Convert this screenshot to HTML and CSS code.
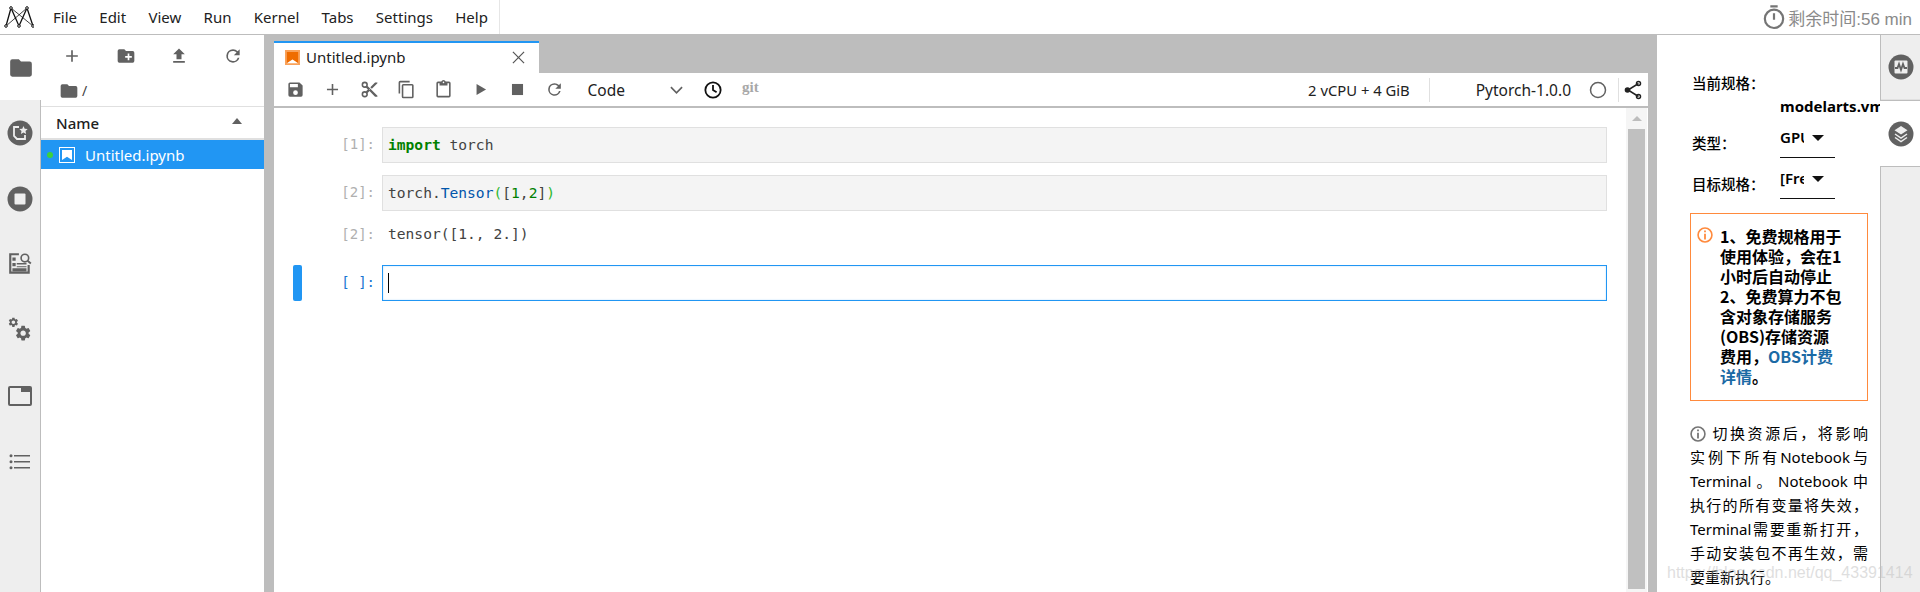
FILE: index.html
```html
<!DOCTYPE html>
<html lang="zh">
<head>
<meta charset="utf-8">
<title>JupyterLab</title>
<link rel="stylesheet" href="styles.css">
</head>
<body>
<div class="app">
  <header class="topbar">
    <svg class="logo" viewBox="0 0 30 22" width="30" height="22"><path fill="none" stroke="#111" stroke-width="1.300" d="M2 20 7 2 15 20 23 2 29 20"/><path fill="none" stroke="#111" stroke-width=".8" d="M7 2 29 20M23 2 2 20"/><g fill="#fff" stroke="#111" stroke-width="1"><circle cx="2" cy="20" r="1.300"/><circle cx="7" cy="2" r="1.300"/><circle cx="23" cy="2" r="1.300"/><circle cx="29" cy="20" r="1.300"/><circle cx="15" cy="20" r="1.300"/></g></svg>
    <nav class="menu">
      <span>File</span><span>Edit</span><span>View</span><span>Run</span><span>Kernel</span><span>Tabs</span><span>Settings</span><span>Help</span>
    </nav>
    <div class="timer">
      <svg viewBox="0 0 24 28" width="22" height="26"><g fill="none" stroke="#757575" stroke-width="2.400"><circle cx="12" cy="16" r="10"/><path d="M12 10v7M8 2.500h8"/></g></svg>
      <span>剩余时间:56 min</span>
    </div>
  </header>
  <div class="workspace">
    <aside class="leftbar">
      <div class="side-tab active">
        <svg viewBox="0 0 24 24" width="26" height="26"><path fill="#616161" d="M10 4H4a2 2 0 0 0-2 2v12a2 2 0 0 0 2 2h16a2 2 0 0 0 2-2V8a2 2 0 0 0-2-2h-8z"/></svg>
      </div>
      <div class="side-tab">
        <svg viewBox="0 0 26 26" width="26" height="26"><circle cx="13" cy="13" r="12.500" fill="#616161"/><path fill="none" stroke="#eee" stroke-width="1.800" d="M12 7H7v9l3 3h8v-4"/><path fill="#eee" d="m16.500 6 1.200 2.700 3 .3-2.200 2 .6 3-2.600-1.500-2.600 1.500.6-3-2.200-2 3-.3z"/></svg>
      </div>
      <div class="side-tab">
        <svg viewBox="0 0 26 26" width="26" height="26"><circle cx="13" cy="13" r="12.500" fill="#616161"/><rect x="7.500" y="7.500" width="11" height="11" rx="1" fill="#eee"/></svg>
      </div>
      <div class="side-tab">
        <svg viewBox="0 0 24 24" width="26" height="26"><path fill="none" stroke="#616161" stroke-width="2" d="M11 3H3v17h17v-7"/><path fill="#616161" d="M5 6h3v3H5zM5 11h3v3H5zM5 16h13v3H5zM9 11h9v1.500H9zM9 14h9v1H9z"/><circle cx="16.500" cy="6.500" r="3.500" fill="none" stroke="#616161" stroke-width="1.500"/><path stroke="#616161" stroke-width="1.800" d="m19 9 3 2.500"/></svg>
      </div>
      <div class="side-tab">
        <svg viewBox="0 0 22 24" width="24" height="26"><path fill="#616161" transform="translate(5.500 6.500) scale(.7)" d="M19.140 12.940c.04-.3.06-.61.06-.94 0-.32-.02-.64-.07-.94l2.030-1.580a.49.49 0 0 0 .12-.61l-1.920-3.320a.488.488 0 0 0-.59-.22l-2.390.96c-.5-.38-1.030-.7-1.620-.94l-.36-2.540a.484.484 0 0 0-.48-.41h-3.840c-.24 0-.43.17-.47.41l-.36 2.540c-.59.24-1.130.57-1.620.94l-2.390-.96c-.22-.08-.47 0-.59.22L2.740 8.870c-.12.21-.08.47.12.61l2.030 1.580c-.05.3-.09.63-.09.94s.02.64.07.94l-2.030 1.580a.49.49 0 0 0-.12.61l1.920 3.320c.12.22.37.29.59.22l2.390-.96c.5.38 1.030.7 1.620.94l.36 2.540c.05.24.24.41.48.41h3.840c.24 0 .44-.17.47-.41l.36-2.540c.59-.24 1.130-.56 1.620-.94l2.390.96c.22.08.47 0 .59-.22l1.920-3.320c.12-.22.07-.47-.12-.61l-2.010-1.580zM12 15.600c-1.980 0-3.600-1.620-3.600-3.600s1.620-3.600 3.600-3.600 3.600 1.620 3.600 3.600-1.620 3.600-3.600 3.600z"/><path fill="#616161" transform="translate(-.5 -.5) scale(.45)" d="M19.140 12.940c.04-.3.06-.61.06-.94 0-.32-.02-.64-.07-.94l2.030-1.580a.49.49 0 0 0 .12-.61l-1.920-3.320a.488.488 0 0 0-.59-.22l-2.390.96c-.5-.38-1.030-.7-1.620-.94l-.36-2.540a.484.484 0 0 0-.48-.41h-3.840c-.24 0-.43.17-.47.41l-.36 2.540c-.59.24-1.130.57-1.620.94l-2.390-.96c-.22-.08-.47 0-.59.22L2.740 8.870c-.12.21-.08.47.12.61l2.030 1.580c-.05.3-.09.63-.09.94s.02.64.07.94l-2.030 1.580a.49.49 0 0 0-.12.61l1.920 3.320c.12.22.37.29.59.22l2.390-.96c.5.38 1.030.7 1.620.94l.36 2.540c.05.24.24.41.48.41h3.840c.24 0 .44-.17.47-.41l.36-2.540c.59-.24 1.130-.56 1.620-.94l2.390.96c.22.08.47 0 .59-.22l1.920-3.320c.12-.22.07-.47-.12-.61l-2.010-1.580zM12 15.600c-1.980 0-3.600-1.620-3.600-3.600s1.620-3.600 3.600-3.600 3.600 1.620 3.600 3.600-1.620 3.600-3.600 3.600z"/></svg>
      </div>
      <div class="side-tab">
        <svg viewBox="0 0 24 20" width="24" height="20"><rect x="1" y="1" width="22" height="18" rx="1" fill="none" stroke="#616161" stroke-width="2"/><rect x="13" y="1" width="10" height="5" fill="#616161"/></svg>
      </div>
      <div class="side-tab">
        <svg viewBox="0 0 24 20" width="24" height="20"><path fill="#616161" d="M6 3h16v1.500H6zM6 9h16v1.500H6zM6 15h16v1.500H6z"/><circle cx="3" cy="3.700" r="1.500" fill="#616161"/><circle cx="3" cy="9.700" r="1.500" fill="#616161"/><circle cx="3" cy="15.700" r="1.500" fill="#616161"/></svg>
      </div>
    </aside>
    <section class="files">
      <div class="files-tools">
        <svg viewBox="0 0 24 24" width="20" height="20"><path fill="#616161" d="M19 13h-6v6h-2v-6H5v-2h6V5h2v6h6z"/></svg>
        <svg viewBox="0 0 24 24" width="20" height="20"><path fill="#616161" d="M20 6h-8l-2-2H4a2 2 0 0 0-2 2v12a2 2 0 0 0 2 2h16a2 2 0 0 0 2-2V8a2 2 0 0 0-2-2zm-1 8h-3v3h-2v-3h-3v-2h3V9h2v3h3z"/></svg>
        <svg viewBox="0 0 24 24" width="20" height="20"><path fill="#616161" d="M9 16h6v-6h4l-7-7-7 7h4zm-4 2h14v2H5z"/></svg>
        <svg viewBox="0 0 24 24" width="20" height="20"><path fill="#616161" d="M17.650 6.350A7.960 7.960 0 0 0 12 4a8 8 0 1 0 7.730 10h-2.080A6 6 0 1 1 12 6c1.660 0 3.140.69 4.220 1.780L13 11h7V4z"/></svg>
      </div>
      <div class="crumbs">
        <svg viewBox="0 0 24 24" width="20" height="20"><path fill="#616161" d="M10 4H4a2 2 0 0 0-2 2v12a2 2 0 0 0 2 2h16a2 2 0 0 0 2-2V8a2 2 0 0 0-2-2h-8z"/></svg>
        <span>/</span>
      </div>
      <div class="file-head">
        <span>Name</span>
        <i class="sort-caret"></i>
      </div>
      <div class="file-row">
        <i class="running-dot"></i>
        <svg class="nb-icon" viewBox="0 0 16 16" width="16" height="16"><rect x=".5" y=".5" width="15" height="15" fill="none" stroke="#fff"/><path fill="#fff" d="M3 3h10v10l-5-3.200L3 13z"/></svg>
        <span>Untitled.ipynb</span>
      </div>
    </section>
    <div class="splitter wide"></div>
    <main class="dock">
      <div class="tabbar">
        <div class="tab">
          <svg viewBox="0 0 16 16" width="15" height="15"><rect width="16" height="16" fill="#f9a25a"/><path fill="#ef6c00" d="M2 2h12v12l-6-3.800L2 14z"/><path fill="#fff" d="M2 14l6-3.800L14 14z"/></svg>
          <span class="tab-name">Untitled.ipynb</span>
          <svg class="tab-close" viewBox="0 0 14 14" width="13" height="13"><path stroke="#555" stroke-width="1.300" d="m1 1 12 12M13 1 1 13"/></svg>
        </div>
      </div>
      <div class="toolbar">
        <svg class="t-icon" viewBox="0 0 24 24"><path fill="#616161" d="M17 3H5a2 2 0 0 0-2 2v14a2 2 0 0 0 2 2h14a2 2 0 0 0 2-2V7zm-5 16a3 3 0 1 1 0-6 3 3 0 0 1 0 6zm3-10H5V5h10z"/></svg>
        <svg class="t-icon" viewBox="0 0 24 24"><path fill="#616161" d="M19 13h-6v6h-2v-6H5v-2h6V5h2v6h6z"/></svg>
        <svg class="t-icon" viewBox="0 0 24 24"><path fill="#616161" d="M9.640 7.640c.23-.5.36-1.050.36-1.640a4 4 0 1 0-4 4c.59 0 1.140-.13 1.640-.36L10 12l-2.360 2.360A3.900 3.900 0 0 0 6 14a4 4 0 1 0 4 4c0-.59-.13-1.140-.36-1.640L12 14l7 7h3v-1zM6 8a2 2 0 1 1 0-4 2 2 0 0 1 0 4zm0 12a2 2 0 1 1 0-4 2 2 0 0 1 0 4zm6-7.500a.5.5 0 1 1 0-1 .5.5 0 0 1 0 1zM19 3l-6 6 2 2 7-7V3z"/></svg>
        <svg class="t-icon" viewBox="0 0 24 24"><path fill="#616161" d="M16 1H4a2 2 0 0 0-2 2v14h2V3h12zm3 4H8a2 2 0 0 0-2 2v14a2 2 0 0 0 2 2h11a2 2 0 0 0 2-2V7a2 2 0 0 0-2-2zm0 16H8V7h11z"/></svg>
        <svg class="t-icon" viewBox="0 0 24 24"><path fill="#616161" d="M19 2h-4.180A3 3 0 0 0 12 0a3 3 0 0 0-2.820 2H5a2 2 0 0 0-2 2v16a2 2 0 0 0 2 2h14a2 2 0 0 0 2-2V4a2 2 0 0 0-2-2zm-7 0a1 1 0 1 1 0 2 1 1 0 0 1 0-2zm7 18H5V4h2v3h10V4h2z"/></svg>
        <svg class="t-icon" viewBox="0 0 24 24"><path fill="#616161" d="M7 5v14l12-7z"/></svg>
        <svg class="t-icon" viewBox="0 0 24 24"><path fill="#616161" d="M5 5h14v14H5z"/></svg>
        <svg class="t-icon" viewBox="0 0 24 24"><path fill="#616161" d="M17.650 6.350A7.960 7.960 0 0 0 12 4a8 8 0 1 0 7.730 10h-2.080A6 6 0 1 1 12 6c1.660 0 3.140.69 4.220 1.780L13 11h7V4z"/></svg>
        <span class="cell-type">Code</span>
        <svg class="chevron" viewBox="0 0 14 8" width="13" height="8"><path fill="none" stroke="#616161" stroke-width="1.800" d="m1 1 6 6 6-6"/></svg>
        <svg class="clock" viewBox="0 0 20 20" width="18" height="18"><circle cx="10" cy="10" r="8.500" fill="none" stroke="#111" stroke-width="2"/><path fill="none" stroke="#111" stroke-width="2" d="M10 4.500V10l4 2.500"/></svg>
        <span class="git">git</span>
        <span class="resources">2 vCPU + 4 GiB</span>
        <i class="tool-sep"></i>
        <span class="kernel">Pytorch-1.0.0</span>
        <svg class="kernel-state" viewBox="0 0 18 18" width="18" height="18"><circle cx="9" cy="9" r="7.500" fill="none" stroke="#616161" stroke-width="1.500"/></svg>
        <i class="tool-sep short"></i>
        <svg class="share" viewBox="0 0 18 20" width="18" height="20"><path fill="none" stroke="#222" stroke-width="1.500" d="M14.500 3.500 4 10l10.500 6.500"/><circle cx="14.500" cy="3.500" r="2" fill="none" stroke="#222" stroke-width="1.500"/><circle cx="14.500" cy="16.500" r="2" fill="none" stroke="#222" stroke-width="1.500"/><circle cx="3.500" cy="10" r="2.800" fill="#222"/></svg>
      </div>
      <div class="notebook">
        <div class="cells">
          <div class="cell">
            <div class="collapser"></div>
            <div class="prompt">[1]:</div>
            <div class="editor"><b class="kw">import</b> torch</div>
          </div>
          <div class="cell">
            <div class="collapser"></div>
            <div class="prompt">[2]:</div>
            <div class="editor">torch.<span class="fn">Tensor</span><span class="paren">(</span>[<span class="num">1</span>,<span class="num">2</span>]<span class="paren">)</span></div>
          </div>
          <div class="cell output">
            <div class="collapser"></div>
            <div class="prompt">[2]:</div>
            <div class="out-text">tensor([1., 2.])</div>
          </div>
          <div class="cell current">
            <div class="collapser"></div>
            <div class="prompt">[ ]:</div>
            <div class="editor"><i class="caret"></i></div>
          </div>
        </div>
        <div class="scrollbar">
          <div class="scroll-up"><i></i></div>
          <div class="scroll-thumb"></div>
        </div>
      </div>
    </main>
    <div class="splitter"></div>
    <section class="specs">
      <div class="spec-row first"><span class="spec-label">当前规格&#65306;</span></div>
      <div class="spec-current">modelarts.vm.cpu.2u</div>
      <div class="spec-row"><span class="spec-label">类型&#65306;</span><span class="spec-select"><span class="spec-val">GPU</span><i class="select-caret"></i></span></div>
      <div class="spec-row"><span class="spec-label">目标规格&#65306;</span><span class="spec-select"><span class="spec-val">[Free]</span><i class="select-caret"></i></span></div>
      <div class="notice">
        <svg class="notice-icon" viewBox="0 0 18 18" width="16" height="16"><circle cx="9" cy="9" r="7.800" fill="none" stroke="#ff8a3d" stroke-width="1.800"/><path fill="#ff8a3d" d="M8 4h2v2H8zM8 7.500h2V14H8z"/></svg>
        <p>1、免费规格用于<br>使用体验&#65292;会在1<br>小时后自动停止<br>2、免费算力不包<br>含对象存储服务<br>(OBS)存储资源<br>费用&#65292;<a href="#">OBS计费<br>详情</a>。</p>
      </div>
      <div class="warning">
        <span class="line"><svg viewBox="0 0 18 18" width="16" height="16"><circle cx="9" cy="9" r="7.800" fill="none" stroke="#757575" stroke-width="1.800"/><path fill="#757575" d="M8 4h2v2H8zM8 7.500h2V14H8z"/></svg> 切换资源后&#65292;将影响</span>
        <span class="line">实例下所有Notebook与</span>
        <span class="line">Terminal 。 Notebook 中</span>
        <span class="line">执行的所有变量将失效&#65292;</span>
        <span class="line">Terminal需要重新打开&#65292;</span>
        <span class="line">手动安装包不再生效&#65292;需</span>
        <span class="line end">要重新执行。</span>
      </div>
    </section>
    <aside class="rightbar">
      <div class="side-tab">
        <svg viewBox="0 0 26 26" width="26" height="26"><circle cx="13" cy="13" r="12.500" fill="#616161"/><rect x="6.500" y="6.500" width="13" height="13" rx="1" fill="#eee"/><path fill="none" stroke="#616161" stroke-width="1.800" d="M7 14h2.500l1.500-4 2 6 2-6 1.500 4H19"/></svg>
      </div>
      <div class="side-tab active">
        <svg viewBox="0 0 26 26" width="26" height="26"><circle cx="13" cy="13" r="12.500" fill="#616161"/><path fill="#eee" d="m13 5 6.500 4.300L13 13.500 6.500 9.300z"/><path fill="none" stroke="#eee" stroke-width="1.500" d="M7 13l6 4 6-4M7 16.500l6 4 6-4"/></svg>
      </div>
    </aside>
  </div>
  <div class="watermark">https://blog.csdn.net/qq_43391414</div>
</div>
</body>
</html>
```
FILE: styles.css
```css
* { box-sizing: border-box; }
html, body { margin: 0; height: 100%; overflow: hidden; background: #fff; }
body { font-family: "Noto Sans", "Noto Sans CJK SC", sans-serif; color: #212121; }
svg { display: block; flex: none; }
i { display: block; }

.app { position: relative; height: 592px; display: flex; flex-direction: column; overflow: hidden; }

.topbar { height: 35px; flex: none; display: flex; align-items: center; border-bottom: 1px solid #bdbdbd; padding-left: 4px; }
.logo { margin-top: -1px; }
.menu { display: flex; align-items: center; height: 34px; padding: 0 11px 0 19px; border-right: 1px solid #e6e6e6; font-size: 15px; color: #212121; gap: 22.300px; }
.timer { margin-left: auto; display: flex; align-items: center; gap: 3px; padding-right: 8px; color: #8a8a8a; font-family: "Liberation Sans", "Noto Sans CJK SC", sans-serif; font-size: 17px; }

.workspace { flex: 1; min-height: 0; display: flex; }

.leftbar { width: 41px; flex: none; background: #eee; border-right: 1px solid #bdbdbd; display: flex; flex-direction: column; }
.side-tab { height: 65.800px; flex: none; display: flex; align-items: center; justify-content: center; }
.leftbar .side-tab.active { background: #fff; height: 65px; margin-right: -1px; position: relative; width: 41px; }
.leftbar .side-tab { width: 40px; }

.files { width: 223px; flex: none; display: flex; flex-direction: column; }
.files-tools { height: 39px; flex: none; display: flex; align-items: center; padding: 3px 21px 0 21px; justify-content: space-between; }
.crumbs { height: 33px; flex: none; display: flex; align-items: center; gap: 3px; padding: 1px 0 0 18px; border-bottom: 1px solid #e0e0e0; font-size: 14px; color: #424242; }
.file-head { height: 33px; flex: none; display: flex; align-items: center; justify-content: space-between; padding: 0 22px 0 15px; border-bottom: 2px solid #e0e0e0; font-size: 15px; font-weight: 500; }
.sort-caret { width: 0; height: 0; border: 5.500px solid transparent; border-top: 0; border-bottom: 6px solid #616161; margin-top: -4px; }
.file-row { height: 29px; flex: none; background: #2196f3; color: #fff; display: flex; align-items: center; padding-left: 6px; font-size: 15px; }
.running-dot { width: 6px; height: 6px; border-radius: 50%; background: #3cd13c; margin-right: 6px; }
.nb-icon { margin-right: 10px; }

.splitter { width: 9px; flex: none; background: #bdbdbd; }
.splitter.wide { width: 10px; }

.dock { width: 1374px; flex: none; display: flex; flex-direction: column; background: #bdbdbd; }
.tabbar { height: 38px; flex: none; padding-top: 6px; display: flex; }
.tab { width: 265px; background: #fff; border-top: 2px solid #2196f3; display: flex; align-items: center; padding: 0 14px 2px 11px; }
.tab-name { margin-left: 6px; font-size: 15px; color: #212121; }
.tab-close { margin-left: auto; }

.toolbar { height: 35px; flex: none; background: #fff; display: flex; align-items: center; padding-left: 12px; border-bottom: 2px solid #bdbdbd; }
.t-icon { width: 19px; height: 19px; margin-right: 18px; }
.cell-type { margin-left: 5.500px; font-size: 15.500px; width: 82.500px; }
.chevron { margin-right: 21px; }
.clock { margin-right: 20px; }
.git { font-family: "Liberation Serif", serif; font-weight: 700; font-size: 15px; color: #a8a8a8; margin-top: -4px; }
.resources { margin-left: auto; font-size: 14.800px; }
.tool-sep { width: 1px; height: 24px; background: #e0e0e0; margin-left: 19px; }
.kernel { font-size: 15.500px; margin-left: 46px; }
.kernel-state { margin-left: 18px; }
.tool-sep.short { margin-left: 11px; }
.share { margin-left: 5px; margin-right: 6px; }

.notebook { flex: 1; min-height: 0; background: #fff; display: flex; padding-right: 1px; }
.cells { flex: 1; min-width: 0; padding: 19px 19px 0 19px; }
.cell { display: flex; height: 36px; margin-bottom: 12px; font-family: "DejaVu Sans Mono", monospace; font-size: 14.600px; line-height: 20px; color: #424242; }
.cell.output { height: 30px; }
.collapser { width: 9px; flex: none; border-radius: 2px; }
.cell.current .collapser { background: #2196f3; }
.prompt { width: 80px; flex: none; text-align: right; padding: 7px 7px 0 0; font-size: 14px; color: #b0b0b0; }
.cell.output .prompt { padding-top: 1px; }
.cell.current .prompt { color: #1976d2; }
.editor { flex: 1; min-width: 0; background: #f4f4f4; border: 1px solid #e0e0e0; padding: 7px 5px; }
.cell.current .editor { background: #fff; border-color: #2196f3; box-shadow: inset 0 0 2px #bbdefb; }
.out-text { padding: 1px 6px; }
.kw { color: #008000; font-weight: 700; }
.fn { color: #0055aa; }
.paren { color: #2eb82e; }
.num { color: #008000; }
.caret { width: 1px; height: 20px; background: #000; }

.scrollbar { width: 21px; flex: none; background: #f5f5f5; padding: 0 2px; }
.scroll-up { height: 21px; display: flex; justify-content: center; align-items: center; }
.scroll-up i { width: 0; height: 0; border: 5px solid transparent; border-top: 0; border-bottom: 5px solid #bdbdbd; }
.scroll-thumb { height: 460px; background: #c0c0c0; }

.specs { width: 223px; flex: none; padding: 0 10px 0 33px; overflow: hidden; font-family: "Noto Sans CJK SC", sans-serif; color: #000; }
.spec-row { display: flex; align-items: flex-start; height: 41px; font-size: 14.500px; font-weight: 500; }
.spec-row.first { height: 24px; margin-top: 36px; }
.spec-label { width: 90px; flex: none; line-height: 24px; padding-left: 2px; }
.spec-current { margin-left: 90px; font-family: "Noto Sans", sans-serif; font-size: 15px; font-weight: 700; line-height: 22px; height: 22px; white-space: nowrap; margin-right: -10px; overflow: hidden; margin-bottom: 14px; }
.spec-select { width: 55px; height: 33px; display: flex; align-items: flex-start; border-bottom: 1px solid #111; margin-top: -6px; font-family: "Noto Sans", sans-serif; font-size: 15px; font-weight: 600; line-height: 24px; }
.spec-val { width: 24px; overflow: hidden; white-space: nowrap; }
.select-caret { width: 0; height: 0; margin: 10px 0 0 8px; border: 6px solid transparent; border-bottom: 0; border-top: 6px solid #111; }

.notice { width: 178px; height: 188px; border: 1px solid #ff8a3d; display: flex; padding: 12px 8px 0 6px; gap: 7px; }
.notice-icon { margin-top: 1px; }
.notice p { margin: 0; font-size: 16px; font-weight: 700; line-height: 20px; white-space: nowrap; }
.notice a { color: #1b6aa5; text-decoration: none; }
.warning { margin-top: 20px; width: 178px; font-family: "Noto Sans", "Noto Sans CJK SC", sans-serif; font-size: 15px; line-height: 24px; }
.line { display: block; text-align: justify; text-align-last: justify; }
.line.end { text-align-last: left; }
.line svg { display: inline-block; vertical-align: -3px; }

.rightbar { width: 40px; flex: none; background: #eee; border-left: 1px solid #bdbdbd; display: flex; flex-direction: column; }
.rightbar .side-tab { width: 40px; height: 65px; border-bottom: 1px solid #e0e0e0; }
.rightbar .side-tab.active { background: #fff; margin-left: -1px; width: 41px; border-bottom: 1px solid #bdbdbd; border-top: 1px solid #bdbdbd; height: 67px; }

.watermark { position: absolute; left: 1667px; top: 564px; font-family: "Liberation Sans", sans-serif; font-size: 16px; color: rgba(190, 190, 190, .5); white-space: nowrap; pointer-events: none; }
```
